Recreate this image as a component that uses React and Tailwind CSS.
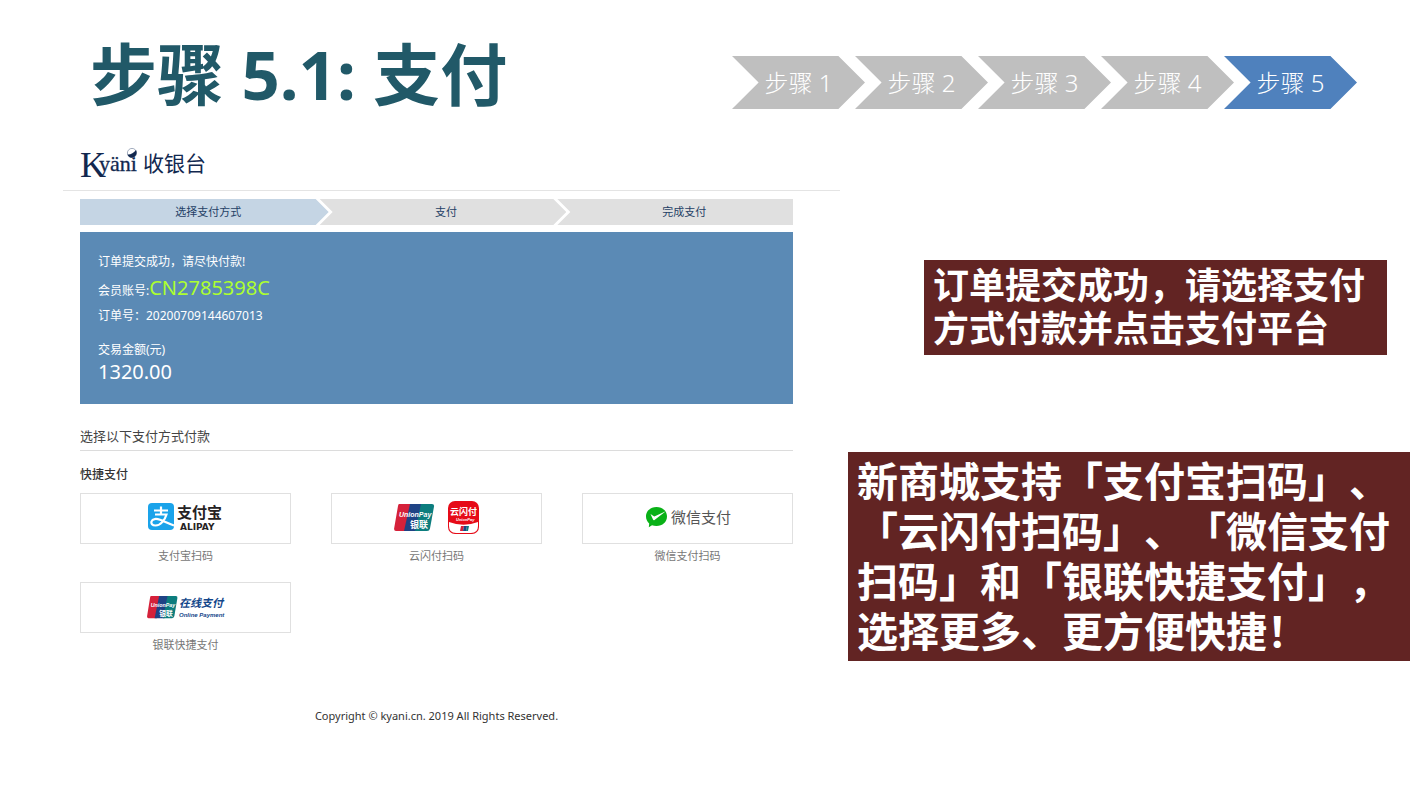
const slideSteps = ['步骤 1', '步骤 2', '步骤 3', '步骤 4', '步骤 5'];

function KyaniLogo() {
  return (
    <svg width="60" height="44" viewBox="0 -4 60 44" role="img" aria-label="Kyäni" fill="#12284f">
      <text x="1" y="32" fontSize="36" fontFamily="Liberation Serif, serif">K</text>
      <text x="20" y="26" fontSize="22" stroke="#12284f" strokeWidth="0.3" fontFamily="Liberation Serif, serif">yäni</text>
      <circle cx="53" cy="8" r="4.6" stroke="#7d8ba3" strokeWidth="0.7" fill="#fff" />
      <path d="M48.500 9.500C51 10 55 8 57 5C58.800 9 56.200 12.900 52.600 12.700C50.600 12.600 49 11.400 48.500 9.500Z" />
    </svg>
  );
}

function UnionPayShape() {
  return (
    <>
      <path d="M5 0H19L13 27H2Q-.4 27 .2 24L4 2Q4.400 0 5 0Z" fill="#d5213a" />
      <path d="M16 0H29L23 27H10Z" fill="#1f4385" />
      <path d="M27 0H38Q40.400 0 40 2.500L36 24.500Q35.500 27 33 27H21Z" fill="#0c7d7e" />
      <g fill="#fff" fontWeight="700">
        <text x="5" y="13" fontSize="7" fontStyle="italic" fontFamily="Liberation Sans, sans-serif">UnionPay</text>
        <text x="16" y="24" fontSize="9" fontFamily="Noto Sans CJK SC, sans-serif">银联</text>
      </g>
    </>
  );
}

function AlipayLogo() {
  return (
    <svg width="76" height="32" viewBox="0 0 76 32" aria-hidden="true">
      <rect x="0" y="1" width="26" height="27" rx="4" fill="#1aa3ea" />
      <path
        d="M6 8.500H20M13 4.500V12.500M7 12.500H18.500C17 17.500 13 23.500 7.500 23.500C4 23.500 3 21.500 3.500 19.500C4.500 16.500 8.500 16.500 12 17.800C16 19.300 20 21.500 26 23.500"
        fill="none"
        stroke="#fff"
        strokeWidth="2.2"
      />
      <g fill="#262223" fontWeight="700">
        <text x="29" y="16" fontSize="15" fontFamily="Noto Sans CJK SC, sans-serif">支付宝</text>
        <text x="32" y="28" fontSize="9" fontFamily="DejaVu Sans, sans-serif">ALIPAY</text>
      </g>
    </svg>
  );
}

function QuickPassLogo() {
  return (
    <svg width="86" height="34" viewBox="0 0 86 34" aria-hidden="true">
      <g transform="translate(0 3)"><UnionPayShape /></g>
      <rect x="54" y="0" width="31" height="33" rx="7" fill="#e60b18" />
      <path d="M55 21Q69.500 26.500 84 21V25Q84 32 77 32H62Q55 32 55 25Z" fill="#fff" />
      <g fill="#fff" fontWeight="700">
        <text x="56" y="14" fontSize="9" fontFamily="Noto Sans CJK SC, sans-serif">云闪付</text>
        <text x="62" y="20" fontSize="4" fontStyle="italic" fontFamily="Liberation Sans, sans-serif">UnionPay</text>
      </g>
      <path d="M67 25H70L69 30H66Z" fill="#d5213a" />
      <path d="M70 25H73L72 30H69Z" fill="#1f4385" />
      <path d="M73 25H75L74 30H72Z" fill="#0c7d7e" />
    </svg>
  );
}

function WeChatPayLogo() {
  return (
    <svg width="86" height="32" viewBox="0 0 86 32" aria-hidden="true">
      <path d="M11.500 5C17.500 5 22 9 22 14.500C22 20 17.500 24 11.500 24C9.800 24 8.300 23.700 7 23.200L3.800 25.300L4.200 21.400C2.200 19.700 1 17.300 1 14.500C1 9 5.500 5 11.500 5Z" fill="#09b117" />
      <path d="M5.500 12L9.300 14.400L20.800 9.300L9.500 18Q8.500 18.600 8 17.500Z" fill="#fff" />
      <text x="26" y="21" fontSize="15" fill="#555" fontFamily="Noto Sans CJK SC, sans-serif">微信支付</text>
    </svg>
  );
}

function OnlinePaymentLogo() {
  return (
    <svg width="78" height="30" viewBox="0 0 78 30" aria-hidden="true">
      <g transform="translate(0 4) scale(.76 .82)"><UnionPayShape /></g>
      <g fill="#12468a" fontWeight="700" fontStyle="italic">
        <text x="32" y="15" fontSize="11" fontFamily="Noto Sans CJK SC, sans-serif">在线支付</text>
        <text x="32" y="25" fontSize="6" fontFamily="Liberation Sans, sans-serif">Online Payment</text>
      </g>
    </svg>
  );
}

const methods = [
  { name: '支付宝扫码', Logo: AlipayLogo },
  { name: '云闪付扫码', Logo: QuickPassLogo },
  { name: '微信支付扫码', Logo: WeChatPayLogo },
  { name: '银联快捷支付', Logo: OnlinePaymentLogo },
];

function SlideSteps() {
  return (
    <ol className="mt-[22px] flex shrink-0">
      {slideSteps.map((label, i) => (
        <li
          key={label}
          aria-current={i === 4 ? 'step' : undefined}
          className={`-ml-[10px] flex h-[53px] w-[133px] items-center justify-center text-2xl font-light text-white [clip-path:polygon(0_0,80%_0,100%_50%,80%_100%,0_100%,20%_50%)] ${i === 4 ? 'bg-[#4f81bd]' : 'bg-[#bfbfbf]'}`}
        >
          {label}
        </li>
      ))}
    </ol>
  );
}

function CheckoutTabs() {
  const tab = 'flex h-[26px] items-center justify-center text-[11px] text-[#1f3f66]';
  return (
    <ol className="mt-2 grid grid-cols-3">
      <li aria-current="step" className={`${tab} -mr-[11px] bg-[#c5d5e4] pl-2 [clip-path:polygon(0_0,calc(100%-13px)_0,100%_50%,calc(100%-13px)_100%,0_100%)]`}>
        选择支付方式
      </li>
      <li className={`${tab} -mr-[11px] bg-[#e0e0e0] pl-2 [clip-path:polygon(2px_0,calc(100%-13px)_0,100%_50%,calc(100%-13px)_100%,2px_100%,15px_50%)]`}>
        支付
      </li>
      <li className={`${tab} bg-[#e0e0e0] pl-5 [clip-path:polygon(2px_0,100%_0,100%_100%,2px_100%,15px_50%)]`}>
        完成支付
      </li>
    </ol>
  );
}

function Checkout() {
  return (
    <section className="min-w-0 flex-1">
      <header className="flex h-[51px] items-center gap-1 border-b border-[#e4e4e4] pb-1 pl-4">
        <KyaniLogo />
        <span className="text-[21px] leading-6 text-[#12284f]">收银台</span>
      </header>
      <div className="pr-[47px] pl-[17px]">
        <CheckoutTabs />
        <div className="mt-[7px] bg-[#5b8ab5] px-[18px] py-5 text-xs leading-5 text-white">
          <p>订单提交成功，请尽快付款!</p>
          <p className="flex h-[34px] items-baseline">
            会员账号:<span className="text-xl leading-8 text-[#adff2f]">CN2785398C</span>
          </p>
          <p>订单号：20200709144607013</p>
          <p className="mt-[14px]">交易金额(元)</p>
          <p className="text-xl leading-6">1320.00</p>
        </div>
        <h2 className="mt-[22px] border-b border-[#dcdcdc] pb-1 text-[13px] leading-5 text-[#444]">选择以下支付方式付款</h2>
        <h3 className="mt-[14px] text-xs leading-5 font-medium text-[#333]">快捷支付</h3>
        <div className="mt-2 grid grid-cols-3 gap-x-10 gap-y-[18px]">
          {methods.map(({ name, Logo }) => (
            <button key={name} type="button" className="flex flex-col items-stretch">
              <span className="flex h-[51px] items-center justify-center border border-[#e0e0e0] pb-[2px]">
                <Logo />
              </span>
              <span className="mt-1 text-[11px] leading-4 text-[#777]">{name}</span>
            </button>
          ))}
        </div>
        <footer className="mt-[53px] text-center text-[11px] leading-5 text-[#333]">
          Copyright © kyani.cn. 2019 All Rights Reserved.
        </footer>
      </div>
    </section>
  );
}

export default function App() {
  return (
    <div lang="zh-CN" className="min-h-screen bg-white pb-8 font-['Noto_Sans','Noto_Sans_CJK_SC',sans-serif] [text-spacing-trim:space-all]">
      <header className="flex items-start justify-between pt-[34px] pr-[65px] pb-[26px] pl-[90px]">
        <h1 className="text-[67px] leading-[80px] font-bold whitespace-nowrap text-[#215968]">步骤 5.1: 支付</h1>
        <SlideSteps />
      </header>
      <main className="flex gap-2 pr-3 pl-[63px]">
        <Checkout />
        <aside className="w-[562px] shrink-0 pt-[120px] font-bold text-white">
          <p className="mr-[23px] ml-auto w-[463px] bg-[#622423] px-[9px] pt-1 pb-[5px] text-[36px] leading-[43px] whitespace-nowrap">
            订单提交成功，请选择支付
            <br />
            方式付款并点击支付平台
          </p>
          <p className="mt-[97px] bg-[#622423] px-[9px] pt-1 pb-[5px] text-[41px] leading-[50px] whitespace-nowrap">
            新商城支持「支付宝扫码」、
            <br />
            「云闪付扫码」、「微信支付
            <br />
            扫码」和「银联快捷支付」，
            <br />
            选择更多、更方便快捷！
          </p>
        </aside>
      </main>
    </div>
  );
}
